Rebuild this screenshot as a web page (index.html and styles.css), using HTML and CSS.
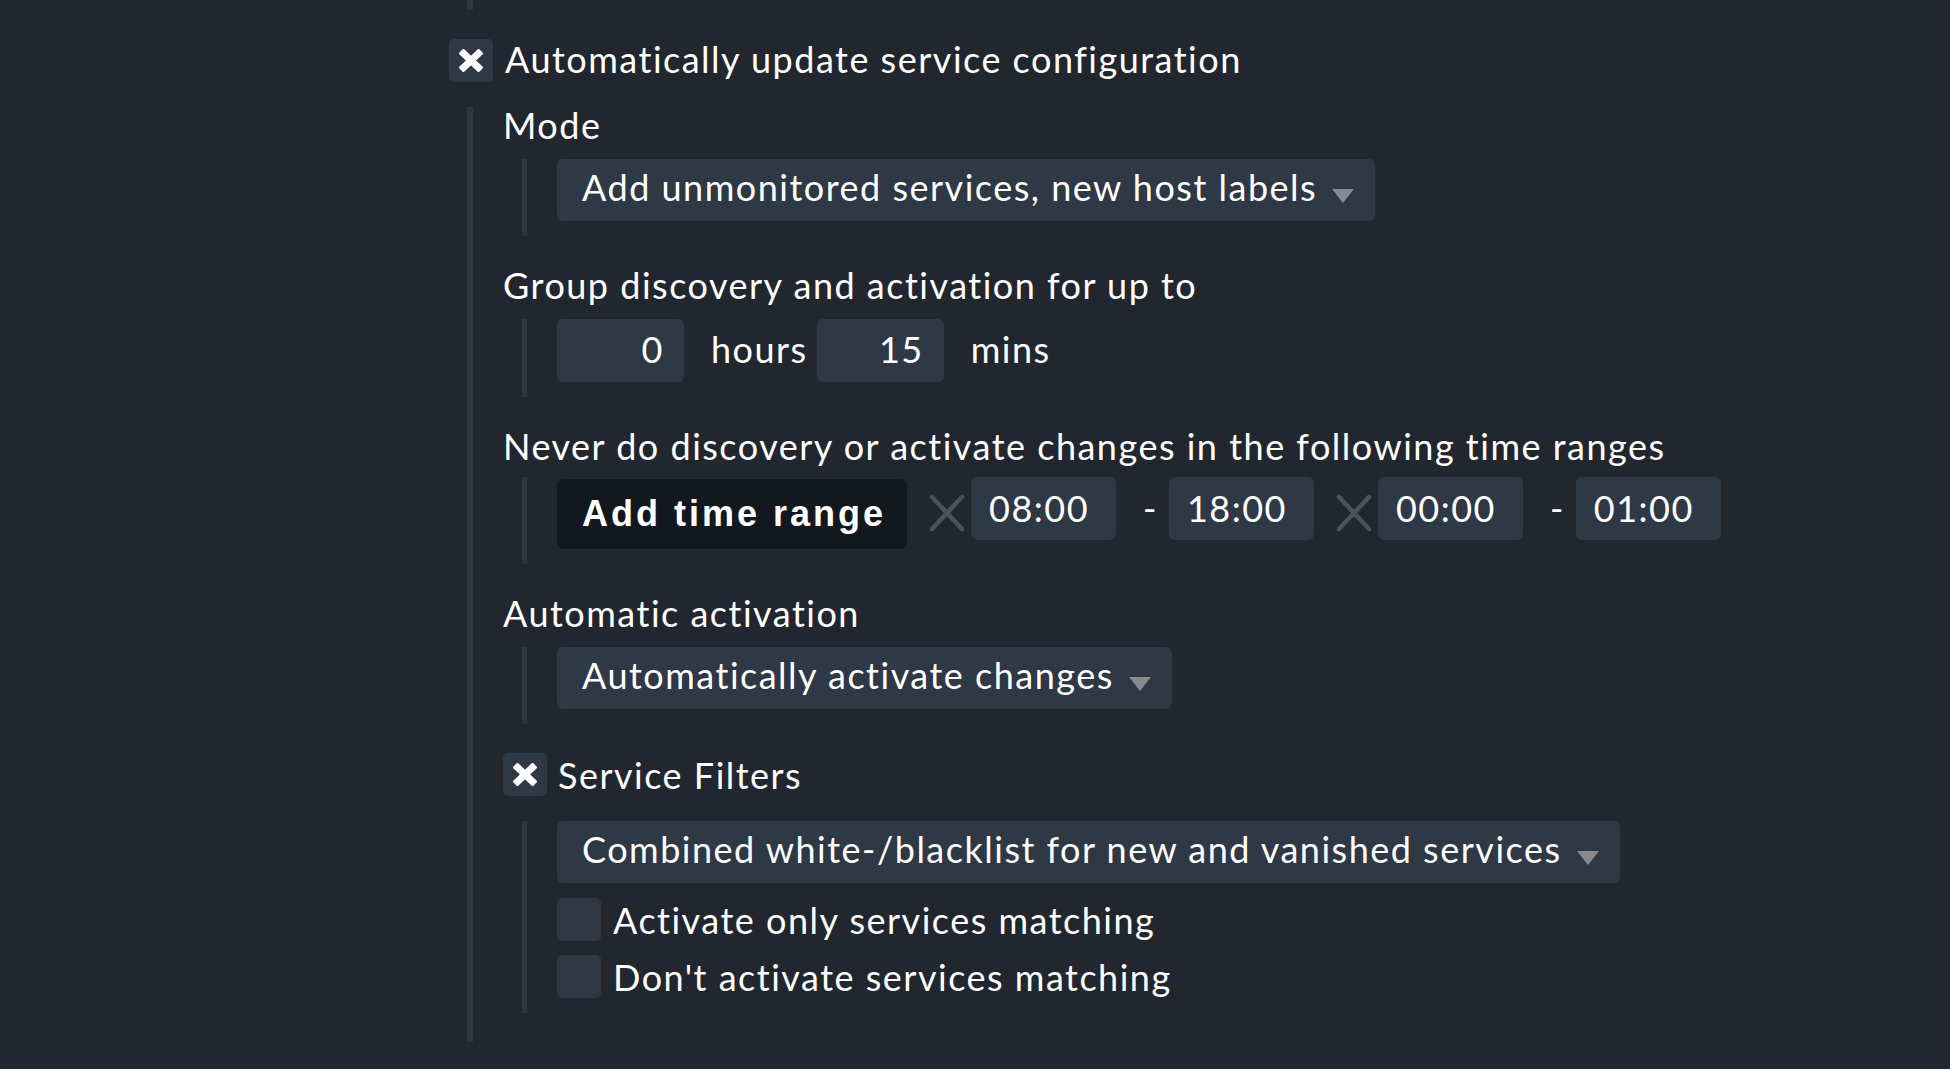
FILE: index.html
```html
<!DOCTYPE html>
<html lang="en">
<head>
<meta charset="utf-8">
<title>Service discovery rule</title>
<link rel="stylesheet" href="styles.css">
</head>
<body>
<div class="page">
  <div class="topline"></div>

  <div class="head">
    <span class="cb cb-checked">
      <svg class="xmark" viewBox="0 0 24 23" width="24" height="23"><path d="M2 2 L22 21 M22 2 L2 21" stroke="#fff" stroke-width="7" fill="none"/></svg>
    </span>
    <span class="head-label">Automatically update service configuration</span>
  </div>

  <div class="outer">
    <div class="sec">
      <div class="title">Mode</div>
      <div class="inner">
        <div class="select"><span>Add unmonitored services, new host labels</span><span class="arrow"></span></div>
      </div>
    </div>

    <div class="sec">
      <div class="title">Group discovery and activation for up to</div>
      <div class="inner">
        <div class="row">
          <input class="num" type="text" value="0">
          <span class="unit unit-h">hours</span>
          <input class="num" type="text" value="15">
          <span class="unit unit-m">mins</span>
        </div>
      </div>
    </div>

    <div class="sec">
      <div class="title">Never do discovery or activate changes in the following time ranges</div>
      <div class="inner inner-time">
        <div class="row row-time">
          <button class="btn" type="button">Add time range</button>
          <svg class="del" viewBox="0 0 36 38" width="36" height="38"><path d="M3 3 L33 35 M33 3 L3 35" stroke="#4c525b" stroke-width="4.5" stroke-linecap="round" fill="none"/></svg>
          <input class="time" type="text" value="08:00">
          <span class="dash">-</span>
          <input class="time" type="text" value="18:00">
          <svg class="del" viewBox="0 0 36 38" width="36" height="38"><path d="M3 3 L33 35 M33 3 L3 35" stroke="#4c525b" stroke-width="4.5" stroke-linecap="round" fill="none"/></svg>
          <input class="time" type="text" value="00:00">
          <span class="dash">-</span>
          <input class="time" type="text" value="01:00">
        </div>
      </div>
    </div>

    <div class="sec">
      <div class="title">Automatic activation</div>
      <div class="inner">
        <div class="select"><span>Automatically activate changes</span><span class="arrow"></span></div>
      </div>
    </div>

    <div class="sec sec-last">
      <div class="subhead">
        <span class="cb cb-checked">
          <svg class="xmark" viewBox="0 0 24 23" width="24" height="23"><path d="M2 2 L22 21 M22 2 L2 21" stroke="#fff" stroke-width="7" fill="none"/></svg>
        </span>
        <span class="subhead-label">Service Filters</span>
      </div>
      <div class="inner inner-filters">
        <div class="select"><span>Combined white-/blacklist for new and vanished services</span><span class="arrow"></span></div>
        <div class="opt"><span class="cb"></span><span class="opt-label">Activate only services matching</span></div>
        <div class="opt"><span class="cb"></span><span class="opt-label">Don't activate services matching</span></div>
      </div>
    </div>
  </div>
</div>
</body>
</html>
```

FILE: styles.css
```css
html, body {
  margin: 0;
  padding: 0;
  background: #22272f;
}

body {
  font-family: Lato, "Noto Sans", sans-serif;
  font-size: 36px;
  line-height: 36px;
  letter-spacing: 1.5px;
  font-variant-ligatures: none;
  color: #ffffff;
  height: 1069px;
  overflow: hidden;
}

.topline {
  margin-left: 467px;
  width: 6px;
  height: 10px;
  background: #2e3540;
}

.head {
  display: flex;
  align-items: center;
  margin-top: 29px;
  margin-left: 449px;
}

.cb {
  display: inline-flex;
  align-items: center;
  justify-content: center;
  width: 44px;
  height: 43px;
  border-radius: 5px;
  background: #2f3845;
  flex: none;
}

.xmark {
  display: block;
}

.head-label {
  margin-left: 12px;
  margin-bottom: 4px;
  white-space: nowrap;
}

.outer {
  margin-top: 25px;
  margin-left: 467px;
  border-left: 6px solid #2e3540;
  padding-left: 30px;
  padding-bottom: 29px;
}

.sec {
  margin-bottom: 31px;
}

.sec-last {
  margin-bottom: 0;
}

.title {
  white-space: nowrap;
  height: 36px;
}

.inner {
  margin-top: 16px;
  margin-left: 19px;
  border-left: 5px solid #2e3540;
  padding-left: 30px;
  padding-bottom: 15px;
}

.inner-time {
  margin-top: 13px;
}

.select {
  display: inline-flex;
  align-items: flex-start;
  height: 62px;
  box-sizing: border-box;
  padding: 10px 21px 16px 25px;
  background: #2f3845;
  border-radius: 6px;
  white-space: nowrap;
}

.arrow {
  margin-left: 15px;
  margin-top: 20px;
  width: 0;
  height: 0;
  border-left: 11px solid transparent;
  border-right: 11px solid transparent;
  border-top: 14px solid #8a8a8a;
}

.row {
  display: flex;
  align-items: baseline;
}

.row-time {
  align-items: flex-start;
}

input {
  font-family: inherit;
  font-size: 36px;
  letter-spacing: inherit;
  color: #ffffff;
  background: #2f3845;
  border: none;
  border-radius: 6px;
  outline: none;
  margin: 0;
  box-sizing: border-box;
}

.num {
  width: 127px;
  height: 63px;
  padding: 0 20px 3px 0;
  text-align: right;
}

.unit-h {
  margin-left: 27px;
  margin-right: 9px;
}

.unit-m {
  margin-left: 27px;
}

.btn {
  margin-top: 2px;
  font-family: "Liberation Sans", Arial, sans-serif;
  font-weight: bold;
  font-size: 36px;
  line-height: normal;
  letter-spacing: 3px;
  color: #ffffff;
  background: #13181e;
  border: none;
  border-radius: 7px;
  height: 70px;
  padding: 0 21px 0 25px;
}

.del {
  display: block;
  margin: 17px 6px 0 22px;
  flex: none;
}

.time {
  width: 145px;
  height: 63px;
  padding: 0 0 2px 18px;
}

.dash {
  margin: 13px 11px 0 27px;
  line-height: 36px;
}

.subhead {
  display: flex;
  align-items: center;
  margin-top: -2px;
}

.subhead-label {
  margin-left: 11px;
  white-space: nowrap;
}

.inner-filters {
  margin-top: 25px;
}

.opt {
  display: flex;
  align-items: center;
  margin-top: 15px;
}

.opt + .opt {
  margin-top: 14px;
}

.opt-label {
  margin-left: 12px;
  white-space: nowrap;
}
```
